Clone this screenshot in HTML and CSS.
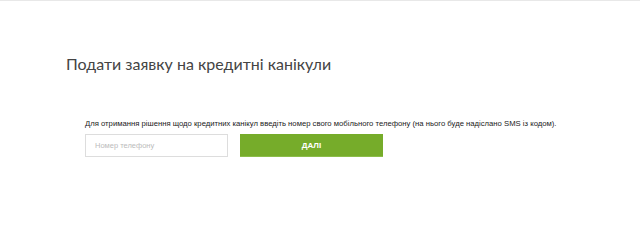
FILE: index.html
```html
<!DOCTYPE html>
<html lang="uk">
<head>
    <meta charset="UTF-8">
    <meta name="viewport" content="width=device-width, initial-scale=1.0">
    <title>Кредитні канікули</title>
    <link rel="stylesheet" href="styles.css">
</head>
<body>
    <div class="top-line"></div>

    <div class="page">
        <h1 class="page-title">Подати заявку на кредитні канікули</h1>

        <form class="phone-form">
            <p class="phone-note">Для отримання рішення щодо кредитних канікул введіть номер свого мобільного телефону (на нього буде надіслано SMS із кодом).</p>
            <div class="phone-row">
                <input type="text" class="phone-input" placeholder="Номер телефону">
                <button type="button" class="next-btn">ДАЛІ</button>
            </div>
        </form>
    </div>
</body>
</html>
```

FILE: styles.css
```css
* {
    margin: 0;
    padding: 0;
    box-sizing: border-box;
}

body {
    font-family: 'Liberation Sans', Arial, sans-serif;
    background: #fff;
    color: #333;
}

.top-line {
    height: 1px;
    background: #e8e8e8;
}

.page {
    padding: 53px 0 0 66px;
}

.page-title {
    font-family: Lato, 'Open Sans', sans-serif;
    font-weight: 400;
    font-size: 16px;
    line-height: 20px;
    color: #444;
}

.phone-form {
    margin: 44px 0 0 19px;
}

.phone-note {
    font-size: 7.7px;
    line-height: 12px;
    color: #222;
}

.phone-row {
    display: flex;
    gap: 12px;
    margin-top: 4px;
}

.phone-input {
    width: 143px;
    height: 23px;
    border: 1px solid #ddd;
    padding: 0 9px;
    font-family: inherit;
    font-size: 7.5px;
    color: #333;
    outline: none;
}

.phone-input::placeholder {
    color: #bbb;
}

.next-btn {
    width: 143px;
    height: 23px;
    background: #76ac2a;
    color: #fff;
    border: none;
    border-bottom: 1px solid #8cbd4a;
    font-family: inherit;
    font-weight: bold;
    font-size: 8px;
    cursor: pointer;
}
```
